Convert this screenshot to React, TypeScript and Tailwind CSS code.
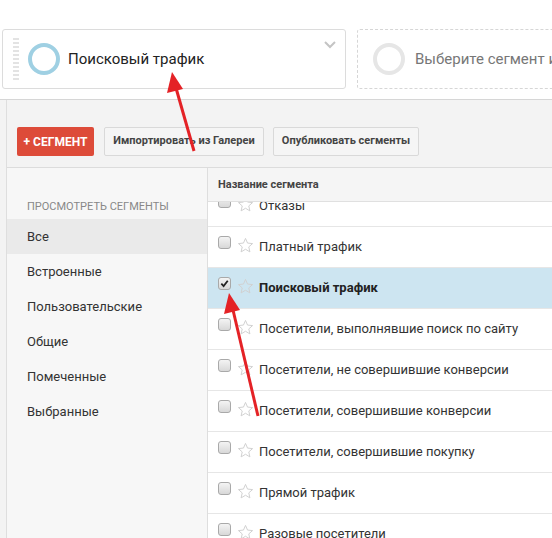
import React from 'react';

const sidebarItems = ['Все', 'Встроенные', 'Пользовательские', 'Общие', 'Помеченные', 'Выбранные'];

const rows = [
  { name: 'Отказы' },
  { name: 'Платный трафик' },
  { name: 'Поисковый трафик', selected: true },
  { name: 'Посетители, выполнявшие поиск по сайту' },
  { name: 'Посетители, не совершившие конверсии' },
  { name: 'Посетители, совершившие конверсии' },
  { name: 'Посетители, совершившие покупку' },
  { name: 'Прямой трафик' },
  { name: 'Разовые посетители' },
];

const Checkbox: React.FC<{ checked?: boolean }> = ({ checked }) => (
  <span className="mb-[9px] flex h-[13px] w-[13px] shrink-0 items-center justify-center rounded-[3px] border border-[#a9a9a9] bg-gradient-to-b from-[#f4f4f4] to-[#d8d8d8]">
    {checked && (
      <svg width="9" height="9" viewBox="0 0 10 10">
        <path d="M1.5 5.2 L4 7.8 L8.6 2" fill="none" stroke="#222" strokeWidth="2" />
      </svg>
    )}
  </span>
);

const Star = () => (
  <svg width="17" height="17" viewBox="0 0 24 24" className="mb-[3px] ml-[6px] shrink-0">
    <polygon
      points="12,2 14.9,8.6 22,9.3 16.6,14 18.2,21 12,17.3 5.8,21 7.4,14 2,9.3 9.1,8.6"
      fill="none"
      stroke="#d0d0d0"
      strokeWidth="1.4"
      strokeLinejoin="round"
    />
  </svg>
);

const Arrows = () => (
  <svg className="pointer-events-none absolute left-0 top-0" width="552" height="538">
    <line x1="194" y1="151" x2="176" y2="88" stroke="#e42226" strokeWidth="3" />
    <polygon points="172,72 167,93 183,89" fill="#e42226" />
    <line x1="258" y1="416" x2="233" y2="310" stroke="#e42226" strokeWidth="3" />
    <polygon points="229,293 224,314 240,310" fill="#e42226" />
  </svg>
);

export default function App() {
  return (
    <div className="relative h-[538px] w-[552px] overflow-hidden bg-white font-['Roboto',sans-serif]">
      {/* Segment picker bar */}
      <div className="flex h-[100px] overflow-hidden border-b border-[#d6d6d6] pl-[2px] pt-[29px]">
        <div className="relative flex h-[60px] w-[344px] shrink-0 items-center rounded-[3px] border border-[#dcdcdc] bg-white">
          <div className="ml-[10px] h-[42px] w-[6px] bg-[repeating-linear-gradient(to_bottom,#e3e3e3_0px,#e3e3e3_2px,transparent_2px,transparent_4px)]" />
          <span className="ml-[9px] h-[32px] w-[32px] rounded-full border-[4px] border-[#9fd0e3]" />
          <span className="ml-[8px] text-[15px] text-[#222]">Поисковый трафик</span>
          <svg className="absolute right-[8px] top-[10px]" width="14" height="10" viewBox="0 0 14 10">
            <path d="M2 2 L7 7 L12 2" fill="none" stroke="#c4c4c4" strokeWidth="2" />
          </svg>
        </div>
        <div className="ml-[11px] flex h-[60px] w-[344px] shrink-0 items-center rounded-[3px] border border-dashed border-[#d6d6d6] pl-[15px]">
          <span className="h-[32px] w-[32px] shrink-0 rounded-full border-[4px] border-[#e6e6e6]" />
          <span className="ml-[10px] whitespace-nowrap text-[15px] text-[#777]">Выберите сегмент из</span>
        </div>
      </div>

      {/* Panel */}
      <div className="h-[438px] bg-[#f3f3f3] pl-[6px]">
        <div className="flex h-full flex-col border-l border-[#dedede]">
          <div className="flex h-[68px] shrink-0 items-start border-b border-[#dcdcdc] pl-[10px] pt-[27px]">
            <button className="h-[29px] w-[77px] rounded-[2px] bg-[#dd4b39] text-[12px] font-bold text-white">
              + СЕГМЕНТ
            </button>
            <button className="ml-[10px] h-[29px] w-[160px] rounded-[2px] border border-[#d9d9d9] bg-[#f5f5f5] text-[11px] font-bold text-[#444]">
              Импортировать из Галереи
            </button>
            <button className="ml-[9px] h-[29px] w-[146px] rounded-[2px] border border-[#d9d9d9] bg-[#f5f5f5] text-[11px] font-bold text-[#444]">
              Опубликовать сегменты
            </button>
          </div>

          <div className="flex min-h-0 flex-1">
            {/* Sidebar */}
            <div className="w-[201px] shrink-0 border-r border-[#dedede] bg-[#f7f7f7]">
              <div className="flex h-[51px] items-end pb-[4px] pl-[20px] text-[11px] text-[#888]">
                ПРОСМОТРЕТЬ СЕГМЕНТЫ
              </div>
              {sidebarItems.map((item, i) => (
                <div
                  key={item}
                  className={`flex h-[35px] items-center pl-[20px] text-[13px] text-[#333] ${i === 0 ? 'bg-[#eaeaea]' : ''}`}
                >
                  {item}
                </div>
              ))}
            </div>

            {/* Table */}
            <div className="flex min-w-0 flex-1 flex-col bg-white">
              <div className="flex h-[34px] shrink-0 items-center border-b border-[#e0e0e0] bg-[#f5f5f5] pl-[10px] pt-[2px] text-[11px] font-bold text-[#444]">
                Название сегмента
              </div>
              <div className="min-h-0 flex-1 overflow-hidden">
                <div className="-mt-[16px]">
                  {rows.map((row) => (
                    <div
                      key={row.name}
                      className={`flex h-[41px] items-center border-b border-[#e6e6e6] pl-[10px] ${row.selected ? 'bg-[#cde5f1]' : ''}`}
                    >
                      <Checkbox checked={row.selected} />
                      <Star />
                      <span
                        className={`ml-[5px] whitespace-nowrap text-[13px] ${row.selected ? 'font-bold text-[#222]' : 'text-[#333]'}`}
                      >
                        {row.name}
                      </span>
                    </div>
                  ))}
                </div>
              </div>
            </div>
          </div>
        </div>
      </div>

      <Arrows />
    </div>
  );
}
